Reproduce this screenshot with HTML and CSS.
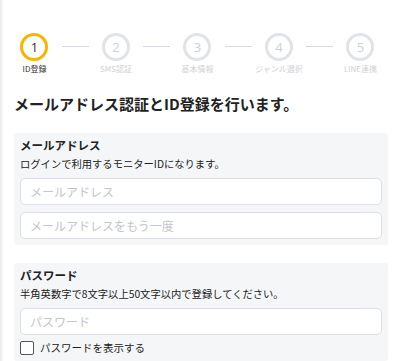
FILE: index.html
```html
<!DOCTYPE html>
<html lang="ja">
<head>
  <meta charset="UTF-8">
  <title>ID登録</title>
  <link rel="stylesheet" href="styles.css">
</head>
<body>
  <div class="page">
    <ol class="steps">
      <li class="step active"><span class="num">1</span><span class="label">ID登録</span></li>
      <li class="line"></li>
      <li class="step"><span class="num">2</span><span class="label">SMS認証</span></li>
      <li class="line"></li>
      <li class="step"><span class="num">3</span><span class="label">基本情報</span></li>
      <li class="line"></li>
      <li class="step"><span class="num">4</span><span class="label">ジャンル選択</span></li>
      <li class="line"></li>
      <li class="step"><span class="num">5</span><span class="label">LINE連携</span></li>
    </ol>

    <h1 class="title">メールアドレス認証とID登録を行います。</h1>

    <div class="card">
      <h2>メールアドレス</h2>
      <p>ログインで利用するモニターIDになります。</p>
      <input type="text" placeholder="メールアドレス">
      <input type="text" placeholder="メールアドレスをもう一度">
    </div>

    <div class="card">
      <h2>パスワード</h2>
      <p>半角英数字で8文字以上50文字以内で登録してください。</p>
      <input type="password" placeholder="パスワード">
      <label class="check"><span class="box"></span>パスワードを表示する</label>
    </div>
  </div>
</body>
</html>
```

FILE: styles.css
```css
body {
  margin: 0;
  font-family: "Noto Sans CJK JP", "Noto Sans", sans-serif;
  color: #222;
  background: linear-gradient(to right, #e6e6e6 0, #f6f6f6 2px, #fff 4px);
}
.page {
  padding: 33px 12px 0 14px;
}
.steps {
  list-style: none;
  margin: 0 0 0 -7px;
  padding: 0;
  display: flex;
  align-items: flex-start;
}
.step {
  width: 56px;
  display: flex;
  flex-direction: column;
  align-items: center;
}
.num {
  width: 22px;
  height: 22px;
  border: 3px solid #e0e3e7;
  border-radius: 50%;
  display: flex;
  align-items: center;
  justify-content: center;
  font-size: 13px;
  color: #cdd1d6;
  font-family: "Open Sans", sans-serif;
}
.label {
  margin-top: 2px;
  font-size: 8px;
  line-height: 12px;
  color: #cfd2d6;
  white-space: nowrap;
}
.step.active .num {
  border-color: #f7b500;
  color: #333;
}
.step.active .label {
  color: #333;
}
.line {
  width: 27px;
  height: 1px;
  margin-top: 13px;
  background: #d6d9dd;
}
.title {
  margin: 18px 0 18px;
  font-size: 15px;
  font-weight: bold;
  line-height: 22px;
}
.card {
  background: #f5f6f8;
  border-radius: 3px;
  padding: 2px 6px 6px;
  margin-bottom: 18px;
}
.card h2 {
  margin: 0;
  font-size: 11.5px;
  line-height: 20px;
  font-weight: bold;
}
.card p {
  margin: 0 0 5px;
  font-size: 10.3px;
  line-height: 18px;
}
.card input {
  display: block;
  box-sizing: border-box;
  width: 100%;
  height: 27px;
  margin-bottom: 7px;
  padding: 0 9px;
  border: 1px solid #dcdfe3;
  border-radius: 5px;
  background: #fff;
  font-family: inherit;
  font-size: 12px;
}
.card input:last-child {
  margin-bottom: 0;
}
.card input::placeholder {
  color: #c3c6ca;
}
.check {
  display: flex;
  align-items: center;
  margin-top: -1px;
  font-size: 10.5px;
  line-height: 14px;
}
.box {
  width: 12px;
  height: 12px;
  border: 1px solid #555;
  border-radius: 2px;
  background: #fff;
  margin-right: 6px;
}
```
